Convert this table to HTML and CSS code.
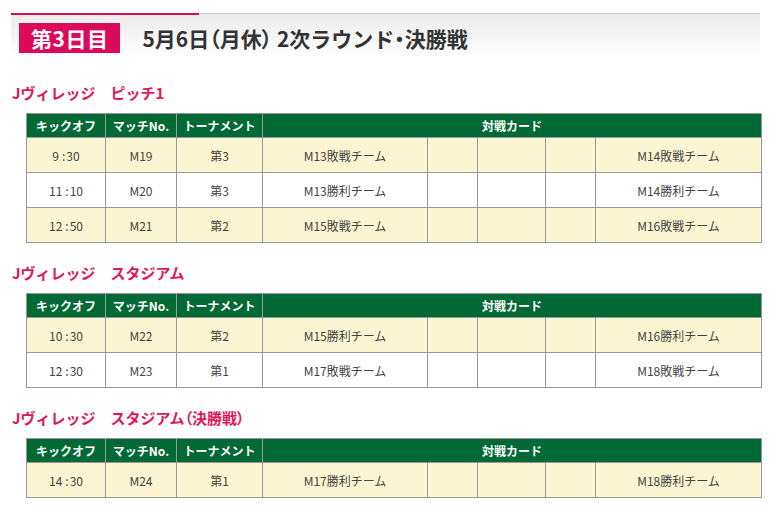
FILE: index.html
```html
<!DOCTYPE html>
<html lang="ja">
<head>
<meta charset="utf-8">
<link rel="stylesheet" href="styles.css">
</head>
<body>
<div class="page">
  <div class="day-header">
    <span class="day-badge">第3日目</span>
    <h1 class="day-title">5月6日<span class="pt">（</span>月休<span class="pt">）</span> 2次ラウンド<span class="pt">・</span>決勝戦</h1>
  </div>

  <h2 class="venue">Jヴィレッジ　ピッチ1</h2>
  <table class="sched">
    <colgroup>
      <col class="c1"><col class="c2"><col class="c3"><col class="c4"><col class="c5"><col class="c6"><col class="c7"><col class="c8">
    </colgroup>
    <thead>
      <tr><th>キックオフ</th><th>マッチNo.</th><th>トーナメント</th><th colspan="5">対戦カード</th></tr>
    </thead>
    <tbody>
      <tr class="odd"><td>9<span class="colon">:</span>30</td><td>M19</td><td>第3</td><td>M13敗戦チーム</td><td></td><td></td><td></td><td>M14敗戦チーム</td></tr>
      <tr><td>11<span class="colon">:</span>10</td><td>M20</td><td>第3</td><td>M13勝利チーム</td><td></td><td></td><td></td><td>M14勝利チーム</td></tr>
      <tr class="odd"><td>12<span class="colon">:</span>50</td><td>M21</td><td>第2</td><td>M15敗戦チーム</td><td></td><td></td><td></td><td>M16敗戦チーム</td></tr>
    </tbody>
  </table>

  <h2 class="venue">Jヴィレッジ　スタジアム</h2>
  <table class="sched">
    <colgroup>
      <col class="c1"><col class="c2"><col class="c3"><col class="c4"><col class="c5"><col class="c6"><col class="c7"><col class="c8">
    </colgroup>
    <thead>
      <tr><th>キックオフ</th><th>マッチNo.</th><th>トーナメント</th><th colspan="5">対戦カード</th></tr>
    </thead>
    <tbody>
      <tr class="odd"><td>10<span class="colon">:</span>30</td><td>M22</td><td>第2</td><td>M15勝利チーム</td><td></td><td></td><td></td><td>M16勝利チーム</td></tr>
      <tr><td>12<span class="colon">:</span>30</td><td>M23</td><td>第1</td><td>M17敗戦チーム</td><td></td><td></td><td></td><td>M18敗戦チーム</td></tr>
    </tbody>
  </table>

  <h2 class="venue">Jヴィレッジ　スタジアム<span class="pt">（</span>決勝戦<span class="pt">）</span></h2>
  <table class="sched">
    <colgroup>
      <col class="c1"><col class="c2"><col class="c3"><col class="c4"><col class="c5"><col class="c6"><col class="c7"><col class="c8">
    </colgroup>
    <thead>
      <tr><th>キックオフ</th><th>マッチNo.</th><th>トーナメント</th><th colspan="5">対戦カード</th></tr>
    </thead>
    <tbody>
      <tr class="odd"><td>14<span class="colon">:</span>30</td><td>M24</td><td>第1</td><td>M17勝利チーム</td><td></td><td></td><td></td><td>M18勝利チーム</td></tr>
    </tbody>
  </table>
</div>
</body>
</html>
```

FILE: styles.css
```css
* { box-sizing: border-box; }
html, body { margin: 0; padding: 0; background: #fff; }
body {
  font-family: "Noto Sans CJK JP", "Noto Sans", sans-serif;
  color: #333;
  overflow: hidden;
}
.page {
  width: 775px;
  padding: 13px 15px 0 11px;
}
.day-header {
  position: relative;
  display: flex;
  align-items: center;
  border-top: 1px solid #c8c8c8;
  background: linear-gradient(#ececec, #ffffff);
  padding: 9px 0 5px 8px;
}
.day-header::before {
  content: "";
  position: absolute;
  top: -1px;
  left: 0;
  width: 188px;
  height: 2px;
  background: #dc0a5a;
}
.day-badge {
  display: block;
  height: 30px;
  line-height: 30px;
  padding: 0 12px;
  background: #dc0a5a;
  color: #fff;
  font-weight: 700;
  font-size: 21px;
  letter-spacing: 0.5px;
}
.day-title {
  margin: 0 0 0 22px;
  font-size: 21px;
  font-weight: 700;
  line-height: 30px;
  color: #333;
}
.pt { font-feature-settings: "palt"; }
.venue {
  margin: 24px 0 9px 1px;
  font-size: 15px;
  line-height: 22px;
  font-weight: 700;
  color: #e2175b;
}
.sched + .venue { margin-top: 19px; }
.sched {
  margin-left: 15px;
  width: 735px;
  border-collapse: collapse;
  table-layout: fixed;
  font-size: 12px;
}
.c1 { width: 79px; }
.c2 { width: 71px; }
.c3 { width: 86px; }
.c4 { width: 165px; }
.c5 { width: 50px; }
.c6 { width: 68px; }
.c7 { width: 50px; }
.c8 { width: 166px; }
.sched th {
  background: #006935;
  color: #fff;
  font-weight: 700;
  height: 24px;
  padding: 0;
  border: 1px solid #999;
  text-align: center;
  line-height: 22px;
}
.sched td {
  height: 35px;
  padding: 0;
  border: 1px solid #999;
  text-align: center;
  color: #444;
  background: #fff;
}
.sched tr.odd td { background: #fcf5d2; }
.colon { margin: 0 1px 0 3px; }
```
